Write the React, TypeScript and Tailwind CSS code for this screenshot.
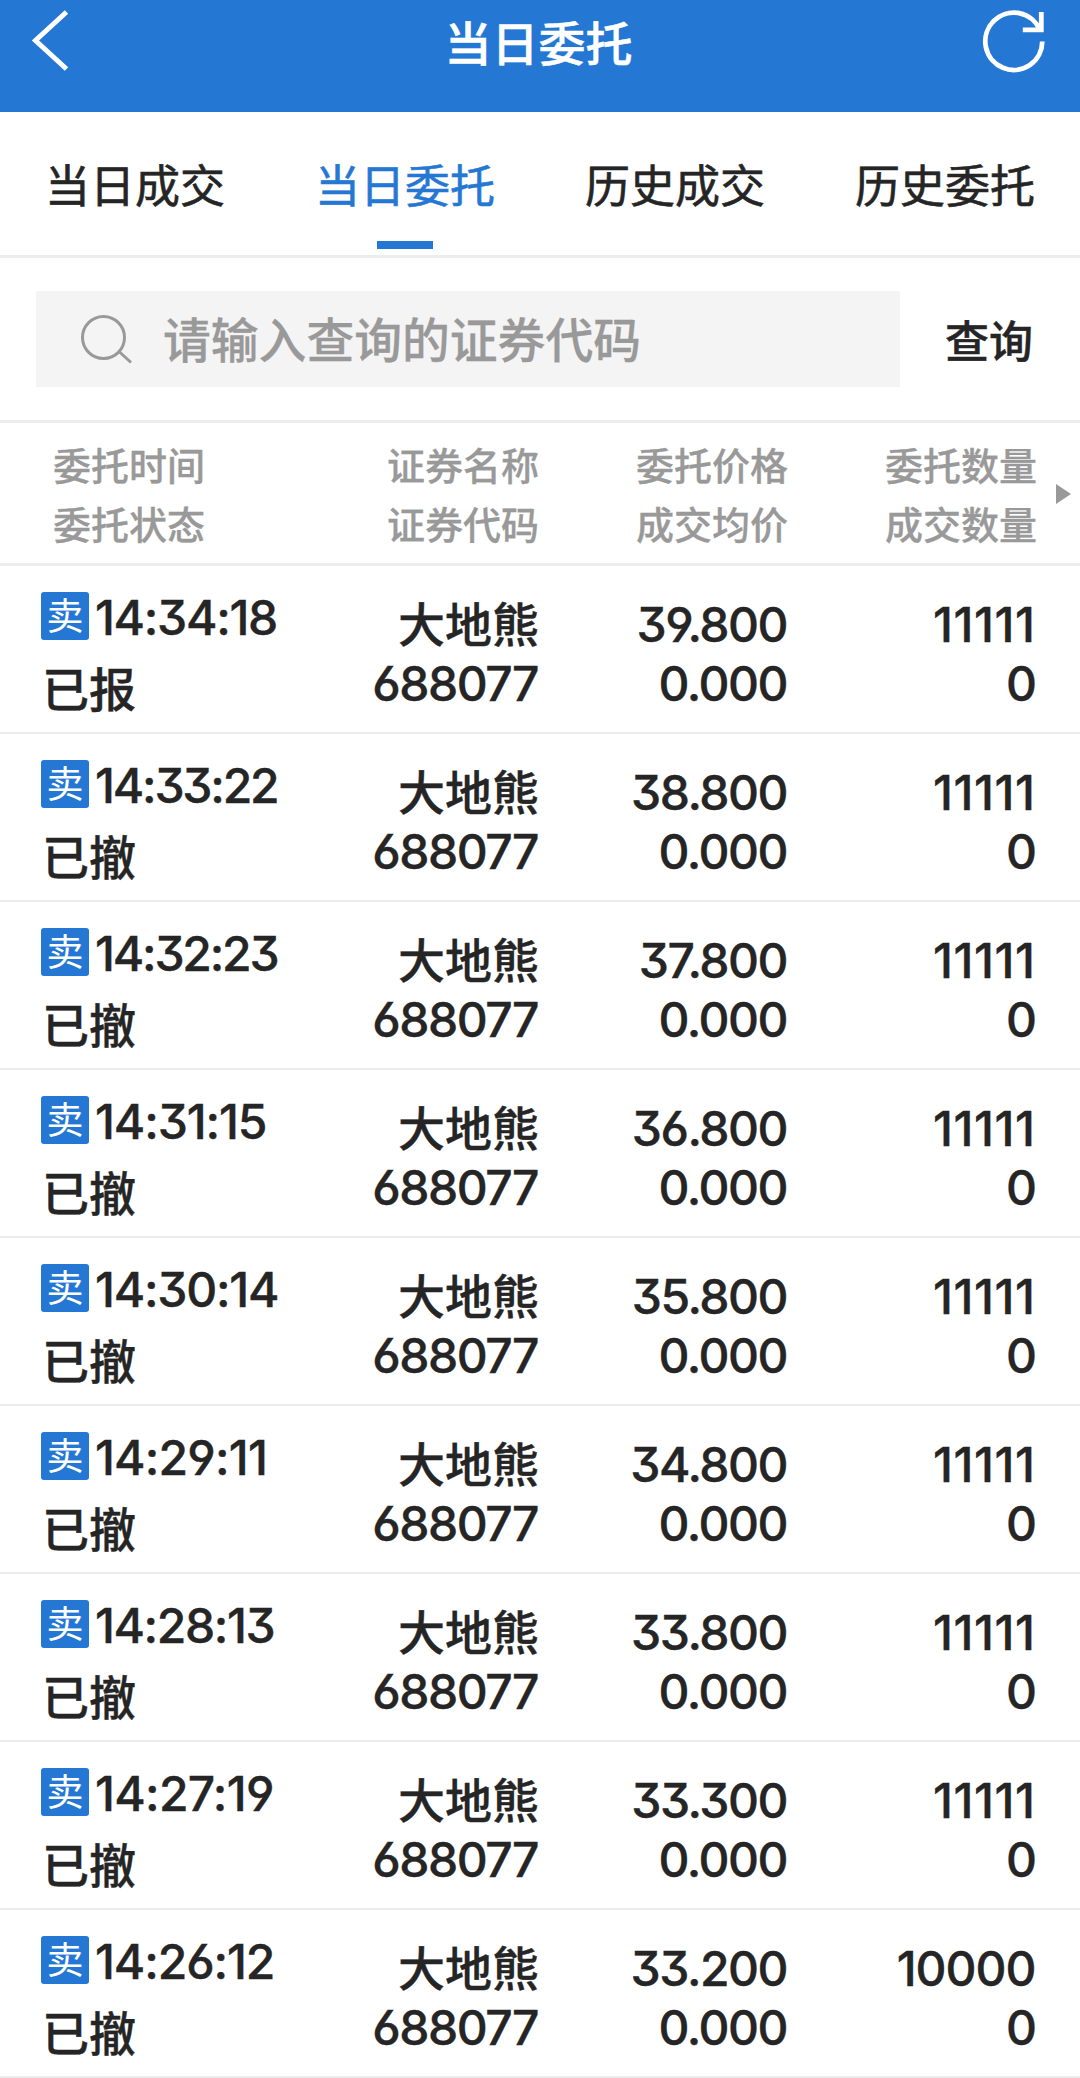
const CJK = "font-['Noto_Sans_CJK_SC',sans-serif]";
const NUM =
  "font-['Inter',sans-serif] font-medium text-[48px] leading-[59px] [-webkit-text-stroke:0.4px] [font-feature-settings:'cv03','cv04','cv09','calt'_0]";

// `track` is the letter spacing of the time, in pixels.
type Order = { time: string; track: number; status: string; price: string; qty: string };

const orders: Order[] = [
  { time: '14:34:18', track: -1.3, status: '已报', price: '39.800', qty: '11111' },
  { time: '14:33:22', track: -2.2, status: '已撤', price: '38.800', qty: '11111' },
  { time: '14:32:23', track: -2.2, status: '已撤', price: '37.800', qty: '11111' },
  { time: '14:31:15', track: -1.1, status: '已撤', price: '36.800', qty: '11111' },
  { time: '14:30:14', track: -1.25, status: '已撤', price: '35.800', qty: '11111' },
  { time: '14:29:11', track: -0.8, status: '已撤', price: '34.800', qty: '11111' },
  { time: '14:28:13', track: -1.4, status: '已撤', price: '33.800', qty: '11111' },
  { time: '14:27:19', track: -0.7, status: '已撤', price: '33.300', qty: '11111' },
  { time: '14:26:12', track: -1.1, status: '已撤', price: '33.200', qty: '10000' },
];

const tabs = ['当日成交', '当日委托', '历史成交', '历史委托'];
const ACTIVE_TAB = 1;

function Header() {
  return (
    <header className="flex h-[112px] items-start justify-between bg-[#2577d4] text-white">
      <svg className="ml-[30px] mt-[8px] h-[66px] w-[42px]" viewBox="0 0 42 66" fill="none" stroke="currentColor" strokeWidth="5">
        <path d="M36.500 4 L5.500 32.500 L36.500 61" />
      </svg>
      <h1 className="ml-[25px] mt-[11px] text-[47px] font-medium leading-[60px] [-webkit-text-stroke:0.5px]">当日委托</h1>
      <svg className="mr-[32px] mt-[8px] h-[66px] w-[68px]" viewBox="0 0 68 66" fill="none" stroke="currentColor" strokeWidth="4.800">
        <path d="M62.300 33.500 A28.500 28.700 0 1 1 60 22" />
        <path d="M61.300 4 V21.800 H42.800" />
      </svg>
    </header>
  );
}

function Tabs() {
  return (
    <nav className="grid h-[146px] grid-cols-4 border-b-[3px] border-[#ededed]">
      {tabs.map((t, i) => (
        <div
          key={t}
          className={
            i === ACTIVE_TAB
              ? 'flex flex-col items-center justify-between pb-[6px] pt-[42px] text-[#2577d4]'
              : 'flex flex-col items-center pt-[42px]'
          }
        >
          <span className="text-[45px] leading-[60px] [-webkit-text-stroke:0.6px]">{t}</span>
          {i === ACTIVE_TAB && <span className="h-[8px] w-[56px] bg-[#2577d4]" />}
        </div>
      ))}
    </nav>
  );
}

function Search() {
  return (
    <div className="flex h-[165px] items-start border-b-[3px] border-[#ededed] pl-[36px] pt-[33px]">
      <div className="flex h-[96px] w-[864px] items-center bg-[#f4f4f4] pl-[43px] text-[#999999]">
        <svg className="h-[52px] w-[54px]" viewBox="0 0 54 52" fill="none" stroke="currentColor" strokeWidth="3">
          <circle cx="24.500" cy="24.500" r="21" />
          <path d="M40 38.500 L52 49.500" />
        </svg>
        <span className="mb-[3px] ml-[30px] text-[47.800px] font-medium leading-[60px] [-webkit-text-stroke:0.3px]">
          请输入查询的证券代码
        </span>
      </div>
      <button className="ml-[45px] mt-[18px] text-[44px] font-medium leading-[60px] [-webkit-text-stroke:0.4px]">查询</button>
    </div>
  );
}

function TableHead() {
  const cells = [
    ['委托时间', '委托状态'],
    ['证券名称', '证券代码'],
    ['委托价格', '成交均价'],
    ['委托数量', '成交数量'],
  ];
  return (
    <div className="flex h-[143px] items-start border-b-[3px] border-[#ededed] pt-[11px] text-[38px] font-medium leading-[59px] text-[#999999] [-webkit-text-stroke:0.3px]">
      <div className="w-[250px] pl-[53px]">
        {cells[0].map((c) => (
          <div key={c}>{c}</div>
        ))}
      </div>
      {cells.slice(1).map((col, i) => (
        <div key={i} className={i === 0 ? 'w-[289px] text-right' : 'w-[249px] text-right'}>
          {col.map((c) => (
            <div key={c}>{c}</div>
          ))}
        </div>
      ))}
      <svg className="ml-[19px] mt-[50px] h-[20px] w-[15px]" viewBox="0 0 15 20" fill="currentColor">
        <path d="M0 0 L15 10 L0 20 Z" />
      </svg>
    </div>
  );
}

function Row({ o }: { o: Order }) {
  return (
    <div className="flex h-[168px] items-start border-b-2 border-[#ededed]">
      <div className="w-[300px] pl-[41px] pt-[26px]">
        <div className="flex h-[48px] items-center">
          <span className="flex h-[48px] w-[48px] items-center justify-center rounded-[3px] bg-[#2577d4] pb-[5px] text-[37px] leading-[48px] text-white">
            卖
          </span>
          <span className={`${NUM} ml-[6px] mt-[2px]`} style={{ letterSpacing: o.track }}>
            {o.time}
          </span>
        </div>
        <div className="ml-[1px] mt-[17px] text-[47px] font-medium leading-[60px] [-webkit-text-stroke:0.4px]">{o.status}</div>
      </div>
      <div className="w-[239px] pt-[26px] text-right">
        <div className="text-[47px] font-medium leading-[59px] [-webkit-text-stroke:0.4px]">大地熊</div>
        <div className={`${NUM} mt-[3px] pr-[1px] tracking-[-1.500px]`}>688077</div>
      </div>
      <div className={`${NUM} w-[249px] pr-[1px] pt-[29px] text-right tracking-[-1.500px]`}>
        <div>{o.price}</div>
        <div>0.000</div>
      </div>
      <div className={`${NUM} w-[249px] pt-[29px] text-right`}>
        <div className={o.qty === '11111' ? 'pr-[1.500px] tracking-[0.600px]' : 'pr-[1.500px] tracking-[-1px]'}>{o.qty}</div>
        <div>0</div>
      </div>
    </div>
  );
}

export default function App() {
  return (
    <div className={`${CJK} w-[1080px] bg-white text-[#252525]`} lang="zh-CN">
      <Header />
      <Tabs />
      <Search />
      <TableHead />
      {orders.map((o) => (
        <Row key={o.time} o={o} />
      ))}
    </div>
  );
}
